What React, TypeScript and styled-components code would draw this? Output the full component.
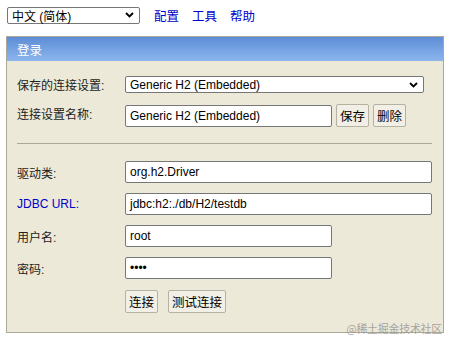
import React from "react";
import styled, { createGlobalStyle } from "styled-components";

const GlobalStyle = createGlobalStyle`
  html, body {
    margin: 0;
    padding: 0;
    background: #fff;
  }
  body {
    font-family: "Liberation Sans", Arial, "Noto Sans CJK SC", sans-serif;
    font-size: 12px;
    color: #000;
  }
`;

const Page = styled.div`
  position: relative;
  width: 453px;
  height: 346px;
  padding: 6px 0 0 6px;
  box-sizing: border-box;
`;

const TopBar = styled.div`
  display: flex;
  align-items: center;
  height: 18px;
  padding-left: 1px;
`;

const LangSelect = styled.div`
  width: 133px;
  height: 17px;
  box-sizing: border-box;
  border: 1px solid #767676;
  border-radius: 2px;
  background: #fff;
  display: flex;
  align-items: center;
  justify-content: space-between;
  padding: 0 5px 0 4px;
  font-size: 12px;
`;

const Chevron = () => (
  <svg width="9" height="6" viewBox="0 0 9 6">
    <path d="M1 1 L4.5 4.5 L8 1" fill="none" stroke="#000" strokeWidth="1.9" />
  </svg>
);

const Links = styled.div`
  display: flex;
  gap: 13px;
  margin-left: 14px;
`;

const TopLink = styled.a`
  color: #0000cc;
  text-decoration: none;
  font-size: 12.5px;
`;

const Panel = styled.div`
  margin-top: 12px;
  width: 438px;
  height: 297px;
  box-sizing: border-box;
  border: 1px solid #aca899;
  background: #ece9d8;
`;

const PanelHeader = styled.div`
  height: 24px;
  background: linear-gradient(#5d8dd6, #8db6ee);
  color: #fff;
  display: flex;
  align-items: center;
  padding-left: 10px;
  font-size: 12.5px;
`;

const Body = styled.div`
  padding: 15px 10px 0 10px;
`;

const Row = styled.div<{ $h: number; $mt?: number }>`
  display: grid;
  grid-template-columns: 108px 1fr;
  align-items: center;
  height: ${(p) => p.$h}px;
  margin-top: ${(p) => p.$mt || 0}px;
`;

const Label = styled.div<{ $link?: boolean; $lift?: number }>`
  color: ${(p) => (p.$link ? "#0000cc" : "#222")};
  font-size: 12px;
  margin-bottom: ${(p) => p.$lift || 0}px;
  white-space: nowrap;
`;

const Field = styled.div`
  display: flex;
  align-items: center;
  gap: 4px;
`;

const Select = styled.div`
  width: 299px;
  height: 17px;
  box-sizing: border-box;
  border: 1px solid #767676;
  border-radius: 2px;
  background: #fff;
  display: flex;
  align-items: center;
  justify-content: space-between;
  padding: 0 5px 0 4px;
`;

const Input = styled.div<{ $w: number }>`
  width: ${(p) => p.$w}px;
  height: 22px;
  box-sizing: border-box;
  border: 1px solid #767676;
  border-radius: 2px;
  background: #fff;
  display: flex;
  align-items: center;
  padding: 0 4px;
  font-size: 12px;
  white-space: nowrap;
`;

const Button = styled.div`
  height: 23px;
  box-sizing: border-box;
  border: 1px solid #b5b2a3;
  border-radius: 2px;
  background: #f1efe6;
  display: flex;
  align-items: center;
  padding: 0 3px;
  font-size: 12.5px;
`;

const Divider = styled.div`
  height: 1px;
  background: #aca899;
  margin: 16px 1px 17px 0;
`;

const Buttons = styled.div`
  display: flex;
  gap: 10px;
`;

const Watermark = styled.div`
  position: absolute;
  right: 11px;
  top: 320px;
  color: rgba(140, 140, 140, 0.75);
  font-size: 11px;
  font-family: "Noto Sans CJK SC", sans-serif;
  letter-spacing: -0.3px;
`;

export default function App() {
  return (
    <>
      <GlobalStyle />
      <Page>
        <TopBar>
          <LangSelect>
            <span>中文 (简体)</span>
            <Chevron />
          </LangSelect>
          <Links>
            <TopLink href="#">配置</TopLink>
            <TopLink href="#">工具</TopLink>
            <TopLink href="#">帮助</TopLink>
          </Links>
        </TopBar>
        <Panel>
          <PanelHeader>登录</PanelHeader>
          <Body>
            <Row $h={17}>
              <Label>保存的连接设置:</Label>
              <Select>
                <span>Generic H2 (Embedded)</span>
                <Chevron />
              </Select>
            </Row>
            <Row $h={23} $mt={11}>
              <Label $lift={4}>连接设置名称:</Label>
              <Field>
                <Input $w={207}>Generic H2 (Embedded)</Input>
                <Button>保存</Button>
                <Button>删除</Button>
              </Field>
            </Row>
            <Divider />
            <Row $h={22}>
              <Label>驱动类:</Label>
              <Input $w={307}>org.h2.Driver</Input>
            </Row>
            <Row $h={22} $mt={10}>
              <Label $link>JDBC URL:</Label>
              <Input $w={307}>jdbc:h2:./db/H2/testdb</Input>
            </Row>
            <Row $h={22} $mt={10}>
              <Label>用户名:</Label>
              <Input $w={207}>root</Input>
            </Row>
            <Row $h={22} $mt={10}>
              <Label>密码:</Label>
              <Input $w={207}>••••</Input>
            </Row>
            <Row $h={24} $mt={10}>
              <span />
              <Buttons>
                <Button>连接</Button>
                <Button>测试连接</Button>
              </Buttons>
            </Row>
          </Body>
        </Panel>
        <Watermark>@稀土掘金技术社区</Watermark>
      </Page>
    </>
  );
}
